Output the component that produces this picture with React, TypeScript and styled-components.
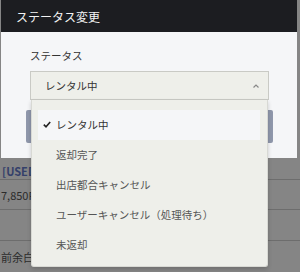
import styled, { createGlobalStyle } from 'styled-components';

const GlobalStyle = createGlobalStyle`
  html, body {
    margin: 0;
    padding: 0;
    background: #858585;
    font-family: 'Noto Sans CJK JP', 'Noto Sans', sans-serif;
  }
`;

const options = ['レンタル中', '返却完了', '出店都合キャンセル', 'ユーザーキャンセル（処理待ち）', '未返却'];

const Screen = styled.div`
  position: relative;
  width: 300px;
  height: 272px;
  overflow: hidden;
  background: #858585;
`;

const PageTable = styled.div`
  display: flex;
  flex-direction: column;
  padding-top: 158px;
`;

const PageRow = styled.div<{ $h: number; $bottom?: boolean }>`
  height: ${(p) => p.$h}px;
  border-bottom: 1px solid #6d6d6d;
  display: flex;
  align-items: ${(p) => (p.$bottom ? 'flex-end' : 'center')};
  padding: ${(p) => (p.$bottom ? '0 0 2px 2px' : '0 0 0 1px')};
  box-sizing: border-box;
`;

const PageText = styled.span<{ $blue?: boolean }>`
  font-size: 11px;
  line-height: 12px;
  color: ${(p) => (p.$blue ? '#34406a' : '#2c2c2c')};
  font-weight: ${(p) => (p.$blue ? 700 : 400)};
  white-space: nowrap;
`;

const Modal = styled.div`
  position: absolute;
  top: 0;
  left: 1px;
  width: 296px;
  height: 158px;
  background: #f5f6f8;
  display: flex;
  flex-direction: column;
`;

const Header = styled.div`
  height: 32px;
  background: #1c1d21;
  color: #f2f2f2;
  font-size: 12px;
  display: flex;
  align-items: center;
  padding-left: 15px;
`;

const Body = styled.div`
  position: relative;
  padding: 16px 0 0 29px;
`;

const Label = styled.div`
  font-size: 10.5px;
  color: #333;
  line-height: 16px;
  margin-bottom: 7px;
`;

const Select = styled.div`
  width: 239px;
  height: 29px;
  box-sizing: border-box;
  background: #eeefea;
  border: 1px solid #c9cac5;
  display: flex;
  align-items: center;
  justify-content: space-between;
  padding: 0 9px 0 14px;
  font-size: 10.5px;
  color: #333;
`;

const Button = styled.div`
  width: 247px;
  height: 33px;
  margin: 10px 0 0 -4px;
  background: #8f97ab;
  border-radius: 2px;
`;

const Menu = styled.div`
  position: absolute;
  top: 100px;
  left: 31px;
  width: 237px;
  height: 167px;
  box-sizing: border-box;
  background: #eeefea;
  border: 1px solid #d8d9d4;
  border-top: none;
  border-radius: 0 0 3px 3px;
  box-shadow: 0 2px 4px rgba(0, 0, 0, 0.18);
  padding: 10px 7px 7px 6px;
  display: flex;
  flex-direction: column;
`;

const Item = styled.div<{ $active?: boolean }>`
  height: 30px;
  display: flex;
  align-items: center;
  padding-left: 5px;
  background: ${(p) => (p.$active ? '#f5f6f8' : 'transparent')};
  font-size: 10.5px;
  color: ${(p) => (p.$active ? '#333' : '#555')};
`;

const CheckSlot = styled.span`
  width: 13px;
  display: flex;
  align-items: center;
`;

const Check = () => (
  <svg width="8" height="7" viewBox="0 0 8 7">
    <path d="M0.8 3.6 L3 5.8 L7.2 1" fill="none" stroke="#222" strokeWidth="1.6" />
  </svg>
);

const Caret = () => (
  <svg width="6" height="4" viewBox="0 0 6 4">
    <path d="M0.5 3.5 L3 1 L5.5 3.5" fill="none" stroke="#888" strokeWidth="1.2" />
  </svg>
);

export default function App() {
  return (
    <Screen>
      <GlobalStyle />
      <PageTable>
        <PageRow $h={22} $bottom>
          <PageText $blue>[USED</PageText>
        </PageRow>
        <PageRow $h={30}>
          <PageText>7,850P</PageText>
        </PageRow>
        <PageRow $h={31} />
        <PageRow $h={32}>
          <PageText>前余白</PageText>
        </PageRow>
      </PageTable>
      <Modal>
        <Header>ステータス変更</Header>
        <Body>
          <Label>ステータス</Label>
          <Select>
            <span>レンタル中</span>
            <Caret />
          </Select>
          <Button />
        </Body>
      </Modal>
      <Menu>
        {options.map((o, i) => (
          <Item key={o} $active={i === 0}>
            <CheckSlot>{i === 0 && <Check />}</CheckSlot>
            {o}
          </Item>
        ))}
      </Menu>
    </Screen>
  );
}
